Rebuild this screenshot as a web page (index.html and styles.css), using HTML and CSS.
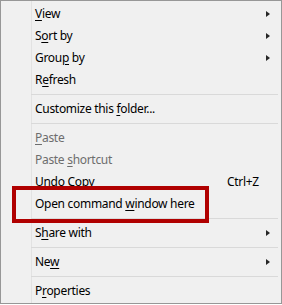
FILE: index.html
```html
<!DOCTYPE html>
<html>
<head>
<meta charset="utf-8">
<link rel="stylesheet" href="styles.css">
</head>
<body>
<div class="menu">
  <div class="item"><span class="label"><u>V</u>iew</span><span class="key"></span><span class="sub"></span></div>
  <div class="item"><span class="label">S<u>o</u>rt by</span><span class="key"></span><span class="sub"></span></div>
  <div class="item"><span class="label">Grou<u>p</u> by</span><span class="key"></span><span class="sub"></span></div>
  <div class="item"><span class="label">R<u>e</u>fresh</span><span class="key"></span><span class="none"></span></div>
  <div class="sep"></div>
  <div class="item"><span class="label">Customize this <u>f</u>older...</span><span class="key"></span><span class="none"></span></div>
  <div class="sep"></div>
  <div class="item disabled"><span class="label"><u>P</u>aste</span><span class="key"></span><span class="none"></span></div>
  <div class="item disabled"><span class="label">Paste <u>s</u>hortcut</span><span class="key"></span><span class="none"></span></div>
  <div class="item"><span class="label">Undo Copy</span><span class="key">Ctrl+Z</span><span class="none"></span></div>
  <div class="item highlight"><span class="label">Open command <u>w</u>indow here</span><span class="key"></span><span class="none"></span></div>
  <div class="sep"></div>
  <div class="item"><span class="label">S<u>h</u>are with</span><span class="key"></span><span class="sub"></span></div>
  <div class="sep"></div>
  <div class="item"><span class="label">Ne<u>w</u></span><span class="key"></span><span class="sub"></span></div>
  <div class="sep"></div>
  <div class="item"><span class="label">P<u>r</u>operties</span><span class="key"></span><span class="none"></span></div>
</div>
</body>
</html>
```
FILE: styles.css
```css
html, body {
  margin: 0;
  padding: 0;
  background: #ffffff;
}
.menu {
  box-sizing: border-box;
  width: 282px;
  height: 304px;
  border: 1px solid #979797;
  background-color: #f0f0f0;
  background-image: linear-gradient(to right, transparent 30px, #e2e2e2 30px, #e2e2e2 31px, transparent 31px);
  padding-top: 2px;
  font-family: "Noto Sans", "Open Sans", sans-serif;
  font-size: 12px;
  letter-spacing: -0.3px;
  color: #000;
}
.item {
  display: grid;
  grid-template-columns: 192px 1fr 12px;
  height: 22px;
  line-height: 22px;
  padding-left: 34px;
  padding-right: 8px;
  white-space: nowrap;
}
.item u {
  text-decoration: underline;
  text-decoration-thickness: 1px;
  text-underline-offset: 2px;
}
.item.disabled {
  color: #6d6d6d;
}
.key {
  text-align: left;
}
.sub {
  display: flex;
  align-items: center;
  padding-left: 5px;
}
.sub::before {
  content: "";
  width: 0;
  height: 0;
  border-top: 3.5px solid transparent;
  border-bottom: 3.5px solid transparent;
  border-left: 4px solid #262626;
}
.sep {
  height: 1px;
  margin: 3px 3px 3px 30px;
  background: #d9d9d9;
}
.highlight {
  position: relative;
}
.highlight::after {
  content: "";
  position: absolute;
  left: 11px;
  top: -7px;
  width: 197px;
  height: 37px;
  box-sizing: border-box;
  border: 4px solid #b00000;
}
```
